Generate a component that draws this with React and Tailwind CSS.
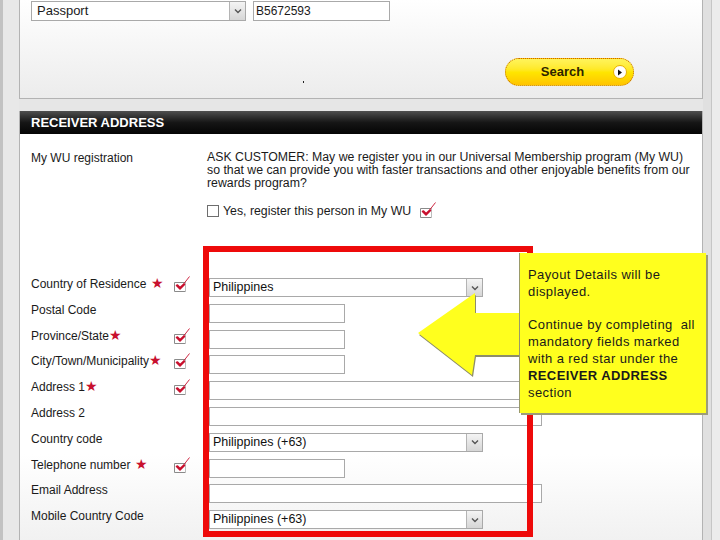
import React from 'react';

const RedCheck = () => (
    <svg width="16" height="16" viewBox="0 0 16 16" className="shrink-0">
        <path d="M0.5 6.5 H11.5 M0.5 15.5 H11.5 M0.5 6.5 V15.5" stroke="#8a8a8a" strokeWidth="1" fill="none" />
        <path d="M11.5 6.5 V15.5" stroke="#bdbdbd" strokeWidth="1" />
        <path d="M2.5 9.5 L6 13 L10.5 8.5 L10 8 L6 11.5 L3.5 9 Z" fill="#c8102e" stroke="#c8102e" strokeWidth="1.6" strokeLinejoin="round" />
        <path d="M6.5 12 L15.5 0.5" stroke="#c8102e" strokeWidth="0.9" />
    </svg>
);

const DropArrow = () => (
    <div className="w-[16px] h-full border-l border-[#b4b4b4] bg-gradient-to-b from-[#f4f4f4] to-[#d6d6d6] flex items-center justify-center">
        <svg width="8" height="6" viewBox="0 0 8 6">
            <path d="M1 1.5 L4 4.5 L7 1.5" stroke="#555" strokeWidth="1.4" fill="none" />
        </svg>
    </div>
);

const Star = () => <span className="text-[#c8102e] text-[14px] leading-none">★</span>;

const rows = [
    { label: 'Country of Residence', star: 'space', check: true, field: 'select', value: 'Philippines' },
    { label: 'Postal Code', field: 'short' },
    { label: 'Province/State', star: 'tight', check: true, field: 'short' },
    { label: 'City/Town/Municipality', star: 'tight', check: true, field: 'short' },
    { label: 'Address 1', star: 'tight', check: true, field: 'long' },
    { label: 'Address 2', field: 'long' },
    { label: 'Country code', field: 'select', value: 'Philippines (+63)' },
    { label: 'Telephone number', star: 'space', check: true, field: 'short' },
    { label: 'Email Address', field: 'long' },
    { label: 'Mobile Country Code', field: 'select', value: 'Philippines (+63)' },
];

const Field = ({ type, value }) => {
    if (type === 'select') {
        return (
            <div className="w-[274px] h-[19px] border border-[#a9a9a9] bg-white flex items-stretch">
                <span className="flex-1 pl-[3px] text-[12.5px] leading-[17px] text-[#111]">{value}</span>
                <DropArrow />
            </div>
        );
    }
    return (
        <div className={`${type === 'short' ? 'w-[136px]' : 'w-[333px]'} h-[19px] border border-[#a9a9a9] bg-white`}></div>
    );
};

export default function App() {
    return (
        <div className="relative w-[720px] h-[540px] overflow-hidden bg-[#e6e6e6] font-['Liberation_Sans',Arial,sans-serif] text-[#1a1a1a]">
            <div className="flex h-full">
                {/* left edge strip */}
                <div className="w-[3px] h-full bg-[#c2c2c2]"></div>
                <div className="w-[16px] h-full bg-[#e8e8e8]"></div>

                <div className="w-[684px] flex flex-col">
                    {/* Search panel */}
                    <div className="relative h-[99px] border-x border-b border-[#b3b3b3] bg-gradient-to-b from-white to-[#ececec] flex flex-col">
                        <div className="flex gap-[7px] pl-[11px] pt-[1px]">
                            <div className="w-[215px] h-[20px] border border-[#a9a9a9] bg-white flex items-stretch">
                                <span className="flex-1 pl-[5px] text-[13px] leading-[18px]">Passport</span>
                                <DropArrow />
                            </div>
                            <div className="w-[137px] h-[20px] border border-[#a9a9a9] bg-white pl-[2px] text-[12px] leading-[18px]">B5672593</div>
                        </div>
                        <div className="flex justify-end pr-[68px] mt-[37px]">
                            <div className="w-[129px] h-[28px] rounded-full border border-dotted border-[#c46a00] bg-gradient-to-b from-[#fff45a] via-[#ffe600] to-[#ffc400] flex items-center">
                                <span className="flex-1 text-center pl-[6px] text-[13px] font-bold text-[#2e2400]">Search</span>
                                <span className="w-[14px] h-[14px] mr-[6px] rounded-full bg-white border border-[#e8b000] flex items-center justify-center">
                                    <svg width="6" height="7" viewBox="0 0 6 7"><path d="M1 0.5 L5 3.5 L1 6.5 Z" fill="#111" /></svg>
                                </span>
                            </div>
                        </div>
                        <span className="absolute left-[283px] top-[81px] w-[1px] h-[2px] bg-[#222]"></span>
                    </div>

                    {/* Receiver address panel */}
                    <div className="mt-[12px] flex-1 border-x border-[#b3b3b3] bg-gradient-to-b from-white from-80% to-[#f1f1f1] flex flex-col">
                        <div className="h-[23px] bg-gradient-to-b from-[#505050] via-[#161616] to-[#050505] pl-[11px] flex items-center">
                            <span className="text-white text-[13px] font-bold">RECEIVER ADDRESS</span>
                        </div>

                        <div className="flex pl-[11px] pt-[17px]">
                            <div className="w-[176px] text-[12px] leading-[14px]">My WU registration</div>
                            <div className="flex flex-col">
                                <p className="text-[12.3px] leading-[13px] whitespace-nowrap">
                                    ASK CUSTOMER: May we register you in our Universal Membership program (My WU)<br />
                                    so that we can provide you with faster transactions and other enjoyable benefits from our<br />
                                    rewards program?
                                </p>
                                <div className="flex items-center mt-[13px] h-[16px]">
                                    <span className="w-[12px] h-[12px] border border-[#6e6e6e] bg-white"></span>
                                    <span className="ml-[4px] text-[12.3px]">Yes, register this person in My WU</span>
                                    <span className="ml-[9px] -mt-[2px]"><RedCheck /></span>
                                </div>
                            </div>
                        </div>

                        <div className="flex flex-col pl-[11px] mt-[53px]">
                            {rows.map((row) => (
                                <div key={row.label} className="flex items-start h-[25.8px]">
                                    <div className="w-[143px] pt-[4px] text-[12px] leading-[16px] whitespace-nowrap">
                                        {row.label}
                                        {row.star === 'space' && <span className="ml-[5px]"><Star /></span>}
                                        {row.star === 'tight' && <Star />}
                                    </div>
                                    <div className="w-[35px] pt-[4px]">
                                        {row.check && <RedCheck />}
                                    </div>
                                    <div className="mt-[6px]">
                                        <Field type={row.field} value={row.value} />
                                    </div>
                                </div>
                            ))}
                        </div>
                    </div>
                </div>

                {/* right edge */}
                <div className="w-[8px] h-full bg-[#e0e0e0]"></div>
                <div className="w-[1px] h-full bg-[#c6c6c6]"></div>
                <div className="flex-1 h-full bg-[#ececec]"></div>
            </div>

            {/* red highlight box */}
            <div className="absolute left-[203px] top-[246px] w-[330px] h-[291px] border-[6px] border-[#ee0a0a]"></div>

            {/* arrow */}
            <svg className="absolute left-[410px] top-[288px]" width="112" height="92" viewBox="0 0 112 92">
                <polygon points="9,47 66,7 66,27 110,27 110,69 66,69 63,89" fill="#8d8d6a" />
                <polygon points="8,45 65,5 65,25 110,25 110,67 65,67 62,87" fill="#ffff1e" />
            </svg>

            {/* callout */}
            <div className="absolute left-[519px] top-[253px] w-[187px] h-[160px] bg-[#ffff1e] border-l border-[#9a9a6a] shadow-[2px_2px_0_#9c9c7a] pl-[8px] pt-[14px] text-[13px] leading-[16.8px] tracking-[0.4px] text-[#1a1a1a] whitespace-pre">
                Payout Details will be<br />
                displayed.<br />
                <br />
                Continue by completing  all<br />
                mandatory fields marked<br />
                with a red star under the<br />
                <span className="font-bold">RECEIVER ADDRESS</span><br />
                section
            </div>
        </div>
    );
}
